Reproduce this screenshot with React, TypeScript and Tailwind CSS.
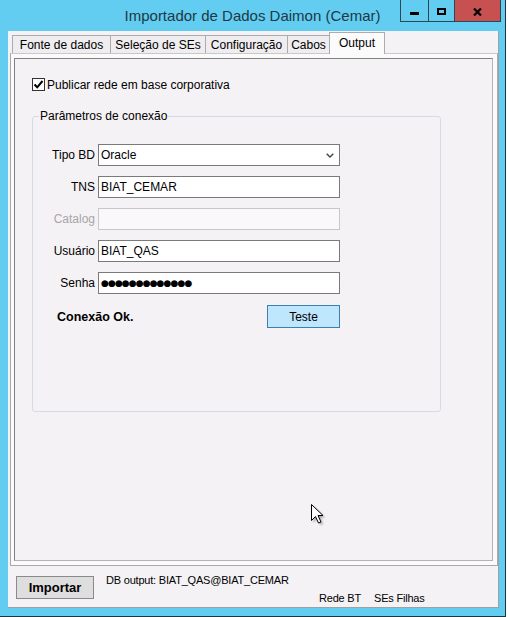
import React from "react";

function Field({ label, value, disabled, select, password }: { label: string; value?: string; disabled?: boolean; select?: boolean; password?: boolean }) {
  return (
    <div className="flex items-center h-[22px]">
      <span className={`w-[62px] text-right text-[12px] leading-[14px] ${disabled ? "text-[#a6a6a6]" : "text-black"}`}>{label}</span>
      <div
        className={`ml-[3px] w-[242px] h-[22px] border flex items-center pl-[2px] pr-[5px] ${
          disabled ? "border-[#c8c8c8] bg-[#faf8fa]" : "border-[#7a7a7a] bg-white"
        }`}
      >
        {password ? (
          <span className="font-['DejaVu_Sans',sans-serif] text-[9px] leading-[12px] tracking-[-0.9px] text-black">●●●●●●●●●●●●●</span>
        ) : (
          <span className="flex-1 text-[12px] leading-[14px] text-black">{value}</span>
        )}
        {select && (
          <svg width="8" height="5" viewBox="0 0 8 5" className="ml-auto">
            <path d="M0.7 0.7 L4 4 L7.3 0.7" fill="none" stroke="#444" strokeWidth="1.4" />
          </svg>
        )}
      </div>
    </div>
  );
}

export default function App() {
  return (
    <div className="w-[508px] h-[617px] bg-white overflow-hidden font-['Liberation_Sans',Arial,sans-serif] text-black relative">
      <div className="w-[506px] h-[617px] bg-[#62cdf0] border-r border-b border-[#1b3440] flex flex-col">
        {/* Title bar */}
        <div className="h-[31px] relative flex justify-center shrink-0">
          <span className="pt-[7px] text-[15px] leading-[18px] text-[#1e3846]">Importador de Dados Daimon (Cemar)</span>
          <div className="absolute right-[4px] top-0 flex h-[22px] border-l border-b border-r border-[#2c4655]">
            <div className="w-[27px] flex justify-center pt-[12px]">
              <div className="w-[9px] h-[3px] bg-black" />
            </div>
            <div className="w-[26px] border-l border-[#2c4655] flex justify-center pt-[8px]">
              <div className="w-[9px] h-[7px] border-2 border-black" />
            </div>
            <div className="w-[46px] border-l border-[#2c4655] bg-[#c75050] flex justify-center pt-[8px]">
              <svg width="9" height="8" viewBox="0 0 9 8">
                <path d="M1 0.5 L8 7.5 M8 0.5 L1 7.5" stroke="black" strokeWidth="2.2" />
              </svg>
            </div>
          </div>
        </div>

        {/* Client */}
        <div className="ml-[8px] w-[491px] h-[577px] bg-[#f5f2f5] border-r border-b border-[#a0a0a0] flex flex-col shrink-0">
          {/* Tab strip */}
          <div className="h-[22px] flex items-end pl-[4px] shrink-0 text-[12px] leading-[14px]">
            <div className="w-[98px] h-[18px] border-l border-t border-[#acacac] bg-[#efedef] flex items-center justify-center">Fonte de dados</div>
            <div className="w-[95px] h-[18px] border-l border-t border-[#acacac] bg-[#efedef] flex items-center justify-center">Seleção de SEs</div>
            <div className="w-[82px] h-[18px] border-l border-t border-[#acacac] bg-[#efedef] flex items-center justify-center">Configuração</div>
            <div className="w-[42px] h-[18px] border-l border-t border-[#acacac] bg-[#efedef] flex items-center justify-center">Cabos</div>
            <div className="w-[56px] h-[22px] -mb-px relative z-10 border-l border-t border-r border-[#acacac] bg-[#fcfbfc] flex justify-center pt-[3px]">Output</div>
          </div>

          {/* Tab page */}
          <div className="ml-[2px] w-[488px] h-[513px] border border-[#a9a9a9] border-t-[#c9c9c9] bg-[#fcfbfc] pl-[3px] pt-[4px] pr-[4px] pb-[4px] flex shrink-0">
            <div className="flex-1 border border-l-[#828282] border-t-[#828282] border-r-[#b4b4b4] border-b-[#b4b4b4] bg-[#f5f2f5] pl-[17px] pt-[19px]">
              {/* Checkbox */}
              <div className="flex items-center h-[13px]">
                <div className="w-[13px] h-[13px] border border-[#333] bg-white flex items-center justify-center">
                  <svg width="11" height="11" viewBox="0 0 11 11">
                    <path d="M1.5 5.5 L4.2 8.3 L9.5 2" fill="none" stroke="black" strokeWidth="2" />
                  </svg>
                </div>
                <span className="ml-[2px] text-[12px] leading-[14px]">Publicar rede em base corporativa</span>
              </div>

              {/* Group box */}
              <div className="mt-[25px] w-[409px] h-[296px] border border-[#d3dce4] rounded-[3px]">
                <span className="block w-fit -mt-[8px] ml-[6px] px-px bg-[#f5f2f5] text-[12px] leading-[14px]">Parâmetros de conexão</span>
                <div className="mt-[21px] flex flex-col gap-[10px]">
                  <Field label="Tipo BD" value="Oracle" select />
                  <Field label="TNS" value="BIAT_CEMAR" />
                  <Field label="Catalog" disabled />
                  <Field label="Usuário" value="BIAT_QAS" />
                  <Field label="Senha" password />
                </div>
                <div className="mt-[11px] flex items-center pl-[24px]">
                  <span className="w-[210px] font-bold text-[12.5px] leading-[14px]">Conexão Ok.</span>
                  <div className="w-[73px] h-[23px] border border-[#3c7fb1] bg-[#bee6fd] flex items-center justify-center text-[12px] leading-[14px]">Teste</div>
                </div>
              </div>
            </div>
          </div>

          {/* Bottom panel */}
          <div className="h-[41px] flex shrink-0">
            <div className="ml-[8px] mt-[10px] w-[78px] h-[23px] border border-[#8a8a8a] bg-[#dedede] flex items-center justify-center font-bold text-[13px] leading-[15px]">Importar</div>
            <div className="ml-[12px] pt-[7px] flex flex-col">
              <span className="text-[11px] leading-[14px] tracking-[-0.2px]">DB output: BIAT_QAS@BIAT_CEMAR</span>
              <div className="mt-[4px] pl-[213px] flex text-[11px] leading-[14px] tracking-[-0.2px]">
                <span className="w-[55px]">Rede BT</span>
                <span>SEs Filhas</span>
              </div>
            </div>
          </div>
        </div>
      </div>

      {/* Mouse cursor */}
      <svg className="absolute left-[310px] top-[503px]" width="18" height="24" viewBox="0 0 18 24">
        <defs>
          <filter id="sh" x="-20%" y="-20%" width="150%" height="150%">
            <feGaussianBlur stdDeviation="1" />
          </filter>
        </defs>
        <path d="M3.5 3.5 L3.5 19.5 L7.5 15.5 L10.5 22 L13 21 L10 14.5 L15 14.5 Z" fill="rgba(0,0,0,0.35)" filter="url(#sh)" />
        <path d="M1.5 1.5 L1.5 17.5 L5.5 13.5 L8.5 20 L11 19 L8 12.5 L13 12.5 Z" fill="white" stroke="black" strokeWidth="1" strokeLinejoin="miter" />
      </svg>
    </div>
  );
}
